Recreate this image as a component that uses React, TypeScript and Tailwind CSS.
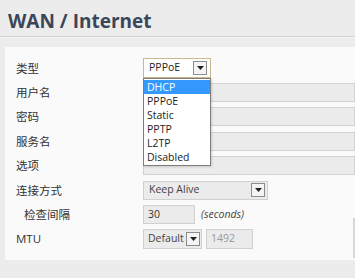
import React from 'react'

const font = { fontFamily: '"Open Sans", "Noto Sans CJK SC", sans-serif' }

function Arrow({ className = '' }: { className?: string }) {
  return (
    <span className={`flex h-[14px] w-[14px] shrink-0 items-center justify-center border border-[#8c8c8c] bg-[#f4f4f4] ${className}`}>
      <svg width="7" height="4" viewBox="0 0 7 4">
        <path d="M0 0h7L3.5 4z" fill="#222" />
      </svg>
    </span>
  )
}

function Row({ label, indent, children }: { label: string; indent?: boolean; children?: React.ReactNode }) {
  return (
    <div className="flex h-[24.4px] items-center">
      <div className={`w-[138px] shrink-0 text-[11.5px] text-[#333] ${indent ? 'pl-[19px]' : 'pl-[11px]'}`}>{label}</div>
      <div className="flex flex-1 items-center">{children}</div>
    </div>
  )
}

function Field() {
  return <div className="h-[19px] flex-1 border border-[#d2d2d2] bg-[#ebebeb]" />
}

export default function App() {
  const options = ['DHCP', 'PPPoE', 'Static', 'PPTP', 'L2TP', 'Disabled']
  return (
    <div className="h-[278px] w-[355px] overflow-hidden bg-[#ececec]" style={font}>
      <div className="px-[8px] pt-[9px] pb-[3px] text-[19px] font-bold leading-[24px] text-[#3b4658]">WAN / Internet</div>
      <div className="h-[2px] border-t border-[#d3d3d3] bg-[#f2f2f2]" />
      <div className="relative ml-[5px] mt-[9px] h-[213px] bg-[#fafafa] pt-[9px]">
        <Row label="类型">
          <div className="flex h-[20px] w-[68px] items-center justify-between border border-[#c9b88c] bg-white pl-[5px] pr-[3px] text-[10.5px] text-[#222]">
            PPPoE
            <Arrow />
          </div>
        </Row>
        <Row label="用户名"><Field /></Row>
        <Row label="密码"><Field /></Row>
        <Row label="服务名"><Field /></Row>
        <Row label="选项"><Field /></Row>
        <Row label="连接方式">
          <div className="flex h-[19px] w-[125px] items-center justify-between border border-[#d0d0d0] bg-[#ebebeb] pl-[5px] pr-[2px] text-[10.5px] text-[#444]">
            Keep Alive
            <Arrow />
          </div>
        </Row>
        <Row label="检查间隔" indent>
          <div className="flex h-[19px] w-[52px] items-center border border-[#d0d0d0] bg-[#ebebeb] pl-[4px] text-[10.5px] text-[#333]">30</div>
          <span className="ml-[6px] text-[10.5px] italic text-[#444]">(seconds)</span>
        </Row>
        <Row label="MTU">
          <div className="flex h-[20px] w-[59px] items-center justify-between border border-[#d0d0d0] bg-[#ebebeb] pl-[4px] pr-[1px] text-[10.5px] text-[#444]">
            Default
            <Arrow />
          </div>
          <div className="ml-[4px] flex h-[20px] w-[47px] items-center border border-[#d0d0d0] bg-[#ebebeb] pl-[4px] text-[10.5px] text-[#999]">1492</div>
        </Row>
        <div className="absolute right-0 top-[171px] h-[40px] w-[2px] bg-[#d8d8d8]" />
        <div className="absolute left-[138px] top-[31px] w-[68px] border border-[#7d7d7d] bg-white py-[1px] text-[10.5px] leading-[14px] text-[#222] shadow-[1px_1px_2px_rgba(0,0,0,0.15)]">
          {options.map((o, i) => (
            <div key={o} className={`pl-[3px] ${i === 0 ? 'bg-[#3399ff] text-white' : ''}`}>{o}</div>
          ))}
        </div>
      </div>
    </div>
  )
}
